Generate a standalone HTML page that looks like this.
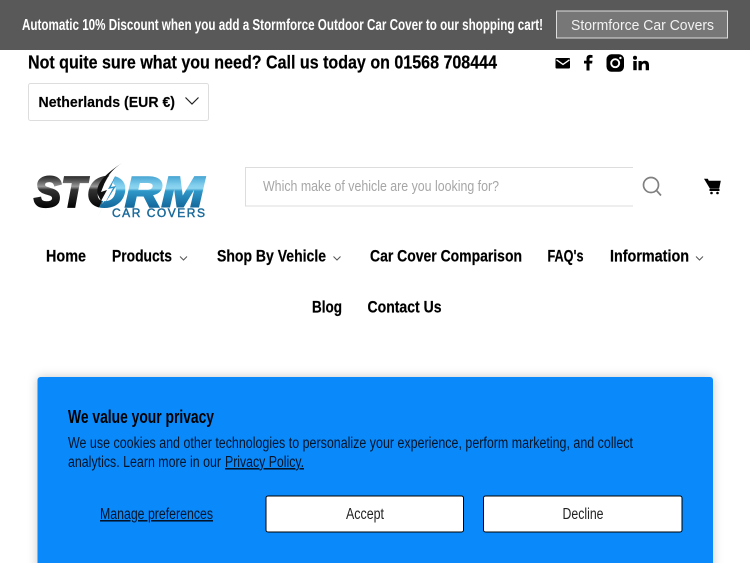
<!DOCTYPE html>
<html lang="en">
<head>
<meta charset="utf-8">
<title>Storm Car Covers</title>
<style>
html,body{margin:0;padding:0;background:#fff;width:750px;height:563px;overflow:hidden}
svg{display:block}
text{font-family:"Liberation Sans",Arial,sans-serif}
.b{font-weight:700}
</style>
</head>
<body>
<svg xmlns="http://www.w3.org/2000/svg" width="750" height="563" viewBox="0 0 750 563">
<defs>
<linearGradient id="blk" gradientUnits="userSpaceOnUse" x1="0" y1="175" x2="0" y2="207">
<stop offset="0" stop-color="#222"/><stop offset=".18" stop-color="#555"/><stop offset=".36" stop-color="#999"/><stop offset=".46" stop-color="#333"/><stop offset="1" stop-color="#050505"/>
</linearGradient>
<linearGradient id="blu" gradientUnits="userSpaceOnUse" x1="0" y1="175" x2="0" y2="207">
<stop offset="0" stop-color="#3f9fd0"/><stop offset=".3" stop-color="#7fcdec"/><stop offset=".42" stop-color="#8fd6f0"/><stop offset=".5" stop-color="#2f98c9"/><stop offset="1" stop-color="#14699c"/>
</linearGradient>
<clipPath id="oL"><polygon points="80,170 116,170 98,210 80,210"/></clipPath>
<clipPath id="oR"><polygon points="116,170 140,170 140,210 98,210"/></clipPath>
</defs>

<!-- announcement bar -->
<rect x="0" y="0" width="750" height="50" fill="#595959"/>
<text class="b" x="22" y="30" font-size="15.500" fill="#fff" textLength="521" lengthAdjust="spacingAndGlyphs">Automatic 10% Discount when you add a Stormforce Outdoor Car Cover to our shopping cart!</text>
<rect x="556.500" y="11" width="171" height="27" fill="#777" stroke="#ddd" stroke-width="1"/>
<text x="571" y="30" font-size="15" fill="#f2f2f2" textLength="143" lengthAdjust="spacingAndGlyphs">Stormforce Car Covers</text>

<!-- phone line -->
<text class="b" x="28" y="68.500" font-size="18" fill="#000" stroke="#000" stroke-width=".2" textLength="469" lengthAdjust="spacingAndGlyphs">Not quite sure what you need? Call us today on 01568 708444</text>

<!-- social icons -->
<rect x="555.500" y="58" width="14.500" height="10.500" rx="1" fill="#000"/>
<path d="M556.500 59.800l6.500 4.600 6.500-4.600" fill="none" stroke="#fff" stroke-width="1.300"/>
<path d="M586.500 70.500V63.500h-2.500v-2.800h2.500v-2.200c0-2.400 1.500-3.600 3.600-3.600.9 0 1.800.1 2.400.2v2.600h-1.500c-1.200 0-1.500.6-1.500 1.400v1.600h3l-.4 2.800h-2.600v7z" fill="#000"/>
<rect x="606.500" y="54.300" width="17.500" height="17.500" rx="5" fill="#000"/>
<circle cx="615.200" cy="63.200" r="4" fill="none" stroke="#fff" stroke-width="1.900"/>
<circle cx="620.400" cy="58" r="1.200" fill="#fff"/>
<circle cx="635" cy="57.800" r="2" fill="#000"/>
<rect x="633.300" y="61" width="3.400" height="9.200" fill="#000"/>
<path d="M638.500 61h3.200v1.400c.6-1 1.800-1.700 3.300-1.700 3 0 4 1.800 4 4.700v4.800h-3.300v-4.400c0-1.300-.3-2.300-1.600-2.300s-2.300 1-2.300 2.400v4.300h-3.300z" fill="#000"/>

<!-- currency select -->
<rect x="28.500" y="83.500" width="180" height="37" rx="2" fill="#fff" stroke="#ddd"/>
<text class="b" x="38.500" y="107" font-size="15" fill="#000" stroke="#000" stroke-width=".15" textLength="136.500" lengthAdjust="spacingAndGlyphs">Netherlands (EUR €)</text>
<path d="M185.500 97.500l6.500 6.500 6.500-6.500" fill="none" stroke="#222" stroke-width="1.200"/>

<!-- logo -->
<g font-style="italic" font-weight="700">
<text x="34" y="206.500" font-size="43" fill="url(#blk)" stroke="url(#blk)" stroke-width="2.200" textLength="52" lengthAdjust="spacingAndGlyphs">ST</text>
<g clip-path="url(#oL)"><text x="87" y="206.500" font-size="43" fill="url(#blk)" stroke="url(#blk)" stroke-width="2" textLength="38" lengthAdjust="spacingAndGlyphs">O</text></g>
<g clip-path="url(#oR)"><text x="87" y="206.500" font-size="43" fill="url(#blu)" stroke="url(#blu)" stroke-width="2" textLength="38" lengthAdjust="spacingAndGlyphs">O</text></g>
<text x="125" y="206.500" font-size="43" fill="url(#blu)" stroke="url(#blu)" stroke-width="2" textLength="79" lengthAdjust="spacingAndGlyphs">RM</text>
</g>
<path d="M122 163L108 177 101 190 110 186 102 204 114 189 113 180z" fill="#fff"/>
<path d="M122 163C114 168 108 175 105 182L101 192 107 190 101 201 98 195C95 186 102 176 122 163z" fill="#111"/>
<path d="M115 177L108 189 113 188 97 218 104 205 116 186 111 187z" fill="#2a8fc4"/>
<text x="112" y="217" font-size="12" font-weight="400" fill="#1a6a9a" stroke="#1a6a9a" stroke-width=".45" textLength="93" lengthAdjust="spacing">CAR COVERS</text>

<!-- search -->
<path d="M633 167.500H245.500V206H633" fill="#fff" stroke="#ddd"/>
<text x="263" y="191" font-size="15" fill="#a6a6a6" textLength="236" lengthAdjust="spacingAndGlyphs">Which make of vehicle are you looking for?</text>
<circle cx="651" cy="185" r="7.500" fill="none" stroke="#808080" stroke-width="1.700"/>
<path d="M656.500 190.500l4.500 5" fill="none" stroke="#808080" stroke-width="1.700"/>

<!-- cart -->
<path d="M704 178.800h3.800l1 2h12l-1.600 8h-9.200z" fill="#000"/>
<rect x="709.500" y="189" width="10" height="2" fill="#000"/>
<circle cx="711.500" cy="193" r="1.300" fill="#000"/>
<circle cx="717.500" cy="193" r="1.300" fill="#000"/>

<!-- navigation -->
<g font-size="16.500" fill="#000" stroke="#000" stroke-width=".2" font-weight="700">
<text x="46" y="261.500" textLength="40" lengthAdjust="spacingAndGlyphs">Home</text>
<text x="112" y="261.500" textLength="60" lengthAdjust="spacingAndGlyphs">Products</text>
<text x="217" y="261.500" textLength="109" lengthAdjust="spacingAndGlyphs">Shop By Vehicle</text>
<text x="370" y="261.500" textLength="152" lengthAdjust="spacingAndGlyphs">Car Cover Comparison</text>
<text x="547.500" y="261.500" textLength="36" lengthAdjust="spacingAndGlyphs">FAQ's</text>
<text x="610" y="261.500" textLength="79" lengthAdjust="spacingAndGlyphs">Information</text>
<text x="312" y="312.500" textLength="30" lengthAdjust="spacingAndGlyphs">Blog</text>
<text x="367.500" y="312.500" textLength="74" lengthAdjust="spacingAndGlyphs">Contact Us</text>
</g>
<g fill="none" stroke="#555" stroke-width="1">
<path d="M180 256.500l3.500 3.500 3.500-3.500"/>
<path d="M333.500 256.500l3.500 3.500 3.500-3.500"/>
<path d="M696 256.500l3.500 3.500 3.500-3.500"/>
</g>

<!-- privacy banner -->
<rect x="37.500" y="377" width="675.500" height="200" rx="3" fill="#0a8afa" style="filter:drop-shadow(0 0 5px rgba(0,0,0,.22))"/>
<text class="b" x="68" y="423" font-size="18.500" fill="#000" textLength="146" lengthAdjust="spacingAndGlyphs">We value your privacy</text>
<text x="68" y="448" font-size="15.500" fill="#03142a" textLength="565" lengthAdjust="spacingAndGlyphs">We use cookies and other technologies to personalize your experience, perform marketing, and collect</text>
<text x="68" y="467" font-size="15.500" fill="#03142a" textLength="153" lengthAdjust="spacingAndGlyphs">analytics. Learn more in our</text>
<text x="225" y="467" font-size="15.500" fill="#03142a" text-decoration="underline" textLength="79" lengthAdjust="spacingAndGlyphs">Privacy Policy.</text>
<text x="100" y="519" font-size="15.500" fill="#03142a" text-decoration="underline" textLength="113" lengthAdjust="spacingAndGlyphs">Manage preferences</text>
<rect x="266" y="496" width="197.500" height="36" rx="2" fill="#fff" stroke="#000"/>
<text x="346" y="519" font-size="15.500" fill="#222" textLength="38" lengthAdjust="spacingAndGlyphs">Accept</text>
<rect x="483.500" y="496" width="198.500" height="36" rx="2" fill="#fff" stroke="#000"/>
<text x="562.500" y="519" font-size="15.500" fill="#222" textLength="41" lengthAdjust="spacingAndGlyphs">Decline</text>
</svg>
</body>
</html>
